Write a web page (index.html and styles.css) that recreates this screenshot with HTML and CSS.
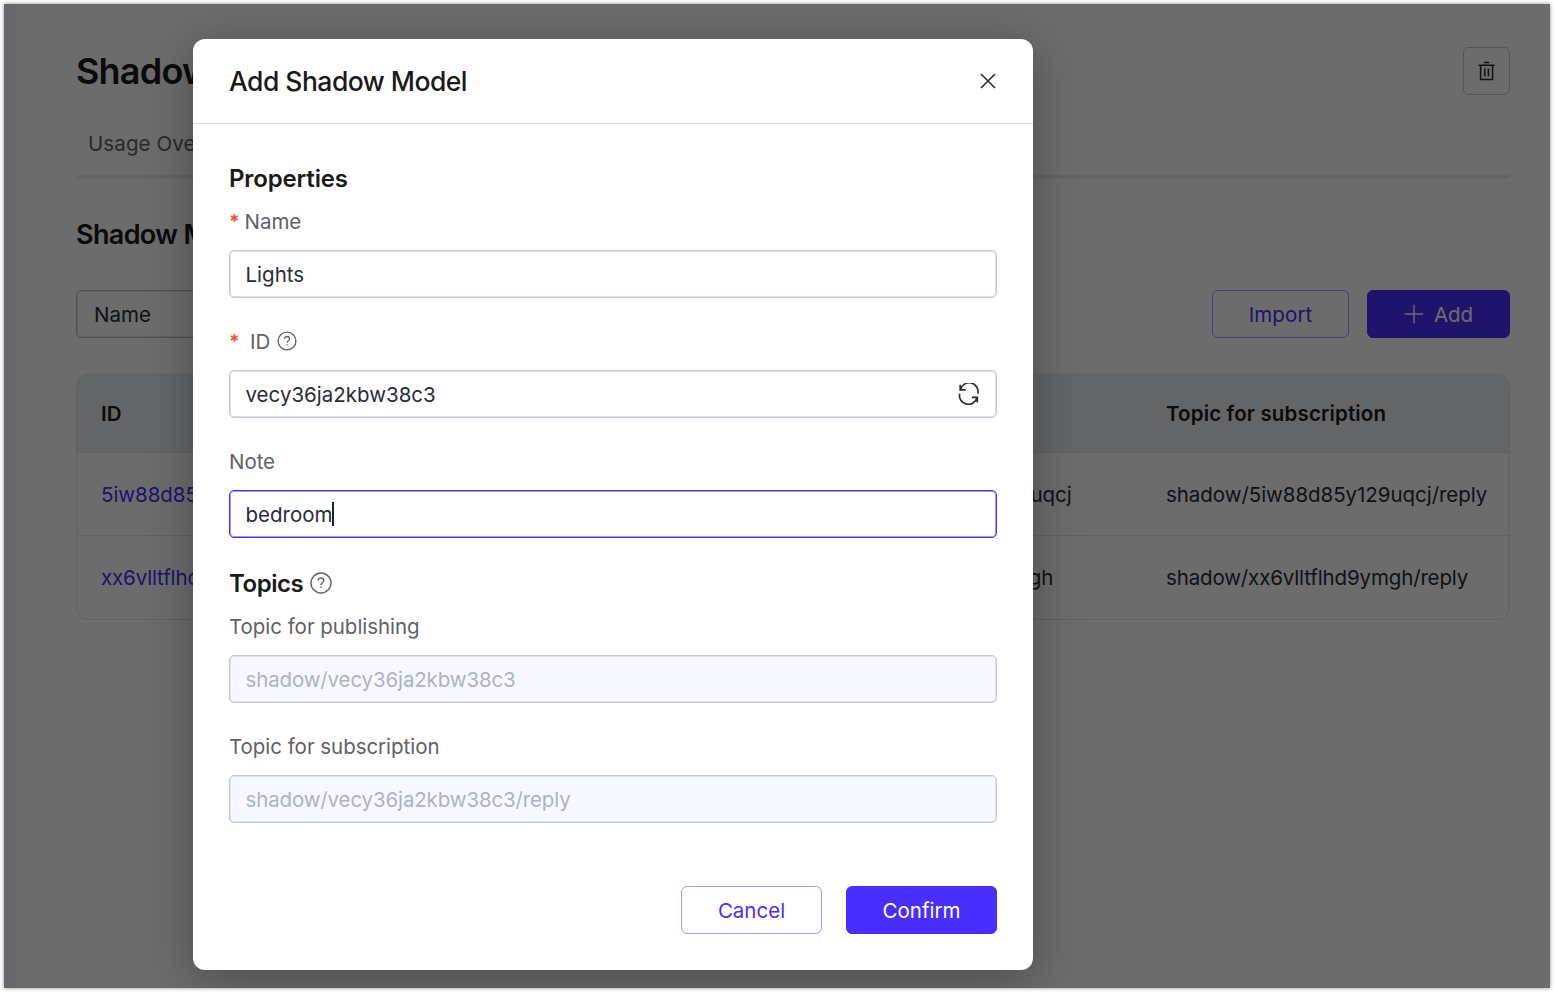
FILE: index.html
```
<!DOCTYPE html>
<html lang="en">
<head>
<meta charset="utf-8">
<title>Shadow Service</title>
<link rel="stylesheet" href="styles.css">
</head>
<body>
<div class="window">
  <div class="page">
    <aside class="sidebar-edge"></aside>
    <main class="content">
      <div class="title-row">
        <h1 class="page-title">Shadow Service</h1>
        <button class="icon-button" aria-label="Delete">
          <svg width="18" height="22" viewBox="0 0 18 22" fill="none" stroke="#282c38" stroke-width="1.5"><path d="M.6 5.2H16.6M6 2.6H11.2M2.6 5.2V19.6H14.6V5.2M6.8 8.6V16.2M10.4 8.6V16.2"/></svg>
        </button>
      </div>
      <nav class="tabs"><span class="tab">Usage Overview</span></nav>
      <h2 class="section-title">Shadow Model List</h2>
      <div class="toolbar">
        <div class="search">Name</div>
        <div class="actions">
          <button class="btn btn-plain btn-import">Import</button>
          <button class="btn btn-primary btn-add">
            <svg class="plus" width="20" height="20" viewBox="0 0 20 20" fill="none" stroke="#fff" stroke-width="1.4"><path d="M.8 10H19.2M10 .8V19.2"/></svg>
            <span>Add</span>
          </button>
        </div>
      </div>
      <div class="table">
        <div class="row head"><span>ID</span><span>Topic for publishing</span><span>Topic for subscription</span></div>
        <div class="row"><span class="link">5iw88d85y129uqcj</span><span>shadow/5iw88d85y129uqcj</span><span>shadow/5iw88d85y129uqcj/reply</span></div>
        <div class="row last"><span class="link">xx6vlltflhd9ymgh</span><span>shadow/xx6vlltflhd9ymgh</span><span>shadow/xx6vlltflhd9ymgh/reply</span></div>
      </div>
    </main>
  </div>
  <div class="overlay">
    <section class="dialog">
      <header class="dialog-header">
        <h2 class="dialog-title">Add Shadow Model</h2>
        <svg width="18" height="18" viewBox="0 0 18 18" fill="none" stroke="#282c38" stroke-width="1.6"><path d="M2 2L16 16M16 2L2 16"/></svg>
      </header>
      <form class="form">
        <h3 class="group-title">Properties</h3>
        <div class="label"><span class="star">*</span><span>Name</span></div>
        <div class="field"><span>Lights</span></div>
        <div class="label next"><span class="star star-wide">*</span><span>ID</span>
          <svg class="help" width="20" height="20" viewBox="0 0 20 20" fill="none" stroke="#606266" stroke-width="1.3"><circle cx="10" cy="10" r="8.9"/><path d="M7.4 8C7.4 6.4 8.5 5.5 10 5.5S12.6 6.5 12.6 7.8C12.6 9.7 10 9.8 10 11.8"/><path d="M10 13.2V14.6"/></svg>
        </div>
        <div class="field"><span>vecy36ja2kbw38c3</span>
          <svg class="refresh" width="22" height="22" viewBox="0 0 22 22" fill="none" stroke="#282c38" stroke-width="1.7"><path d="M2.2 1.8V6.8H7.6M2.6 6.6A8.8 8.8 0 0 1 19.8 10.6M19.3 19.4V14.4H13.9M18.9 14.6A8.8 8.8 0 0 1 1.7 10.6"/></svg>
        </div>
        <div class="label next"><span>Note</span></div>
        <div class="field focus"><span>bedroom</span><i class="caret"></i></div>
        <h3 class="group-title topics"><span>Topics</span>
          <svg class="help" width="22" height="22" viewBox="0 0 20 20" fill="none" stroke="#606266" stroke-width="1.3"><circle cx="10" cy="10" r="9.1"/><path d="M7.4 8C7.4 6.4 8.5 5.5 10 5.5S12.6 6.5 12.6 7.8C12.6 9.7 10 9.8 10 11.8"/><path d="M10 13.2V14.6"/></svg>
        </h3>
        <div class="label"><span>Topic for publishing</span></div>
        <div class="field disabled"><span>shadow/vecy36ja2kbw38c3</span></div>
        <div class="label next"><span>Topic for subscription</span></div>
        <div class="field disabled"><span>shadow/vecy36ja2kbw38c3/reply</span></div>
        <footer class="dialog-footer">
          <button type="button" class="btn btn-plain btn-cancel">Cancel</button>
          <button type="button" class="btn btn-primary btn-confirm">Confirm</button>
        </footer>
      </form>
    </section>
  </div>
</div>
</body>
</html>
```
FILE: styles.css
```
* { box-sizing: border-box; }
body {
  margin: 0;
  padding: 4px;
  height: 992px;
  overflow: hidden;
  background: #fff;
  color: #282c38;
  font: 20.5px/30px Inter, "Liberation Sans", sans-serif;
}
h1, h2, h3 { margin: 0; font-weight: 600; color: #1a1a1a; }
button { font: inherit; padding: 0; margin: 0; background: none; }
svg { display: block; flex: none; }
.window {
  position: relative;
  width: 1546px;
  height: 984px;
  overflow: clip;
  box-shadow: 0 0 4px rgba(0, 0, 0, .45);
}
.page { display: flex; height: 100%; background: #fff; white-space: nowrap; }
.sidebar-edge { width: 12px; background: #f2f6fc; }
.content { flex: 1; padding: 43px 40px 0 60px; }
.title-row { display: flex; justify-content: space-between; align-items: center; height: 48px; }
.page-title { font-size: 36px; line-height: 48px; letter-spacing: -.8px; }
.icon-button {
  display: flex; align-items: center; justify-content: center;
  width: 47px; height: 48px;
  border: 1px solid #c4c6cc; border-radius: 6px;
}
.tabs { height: 84px; padding: 34px 12px 0; border-bottom: 4px solid #ebeef5; }
.tab { color: #606266; letter-spacing: .1px; }
.section-title { margin-top: 38px; font-size: 27px; line-height: 36px; letter-spacing: -.65px; }
.toolbar { display: flex; justify-content: space-between; margin-top: 37px; height: 48px; }
.search {
  width: 300px; padding: 9px 17px 7px;
  border: 1px solid #bcc0cc; border-radius: 5px;
  box-shadow: inset 0 0 0 1px #e1e3e9;
}
.actions { display: flex; gap: 18px; }
.btn {
  display: flex; align-items: center; justify-content: center;
  height: 48px; padding-top: 2px; border-radius: 6px; border: 1px solid #4a2dff;
}
.btn-plain { color: #4a2dff; border-color: #a798ff; }
.btn-primary { color: #fff; background: #4a2dff; }
.btn-import { width: 137px; letter-spacing: .1px; }
.btn-add { width: 143px; gap: 10px; }
.plus { margin-bottom: 2px; }
.table { margin-top: 36px; height: 246px; border: 1px solid #e1e4ea; border-radius: 12px; overflow: hidden; }
.row {
  display: grid; grid-template-columns: 705px 360px 1fr; align-items: center;
  height: 83px; padding: 2px 0 0 24px; border-bottom: 1px solid #e6e8ee; letter-spacing: -.05px;
}
.row.head { height: 78px; padding-top: 1px; background: #ebeef3; font-weight: 600; color: #1a1a1a; letter-spacing: .15px; }
.row.last { padding-top: 0; border-bottom: 0; letter-spacing: -.14px; }
.link { color: #4a2dff; }
.overlay { position: absolute; inset: 0; padding: 35px 0 0 189px; background: rgba(0, 0, 0, .576); }
.dialog {
  width: 840px; height: 931px; background: #fff; border-radius: 12px;
  box-shadow: 0 10px 48px rgba(0, 0, 0, .3);
}
.dialog-header {
  display: flex; justify-content: space-between; align-items: center;
  height: 85px; padding: 0 36px; border-bottom: 1px solid #dcdee3;
}
.dialog-title { font-size: 26.5px; font-weight: 500; line-height: 36px; letter-spacing: -.52px; }
.form { padding: 39px 36px 0; }
.group-title { font-size: 24px; line-height: 32px; letter-spacing: -.15px; }
.topics { display: flex; align-items: center; gap: 7px; margin-top: 30px; letter-spacing: -.45px; }
.label { display: flex; align-items: center; height: 30px; margin-top: 12px; color: #606266; letter-spacing: -.04px; white-space: nowrap; }
.label.next { margin-top: 29px; }
.star { width: 15.5px; color: #f4512c; font-size: 19px; font-weight: 700; }
.star-wide { width: 21px; }
.help { margin-bottom: 2px; }
.label .help { margin-left: 7px; }
.field {
  display: flex; align-items: center; height: 48px; margin-top: 13px; padding: 0 16px 0 15.5px;
  border: 1px solid #c3c7d6; border-radius: 5px;
  box-shadow: inset 0 0 0 1px #dfe2ea;
}
.field span { padding-top: 2px; }
.focus { border-color: #4a2dff; box-shadow: inset 0 0 0 1px #a798ff; }
.disabled { background: #f5f9ff; color: #adb3c4; letter-spacing: -.14px; }
.refresh { margin-left: auto; }
.caret { width: 2px; height: 24px; background: #1d2130; }
.dialog-footer { display: flex; justify-content: flex-end; gap: 24px; margin-top: 63px; }
.btn-cancel { width: 141px; }
.btn-confirm { width: 151px; }
```
